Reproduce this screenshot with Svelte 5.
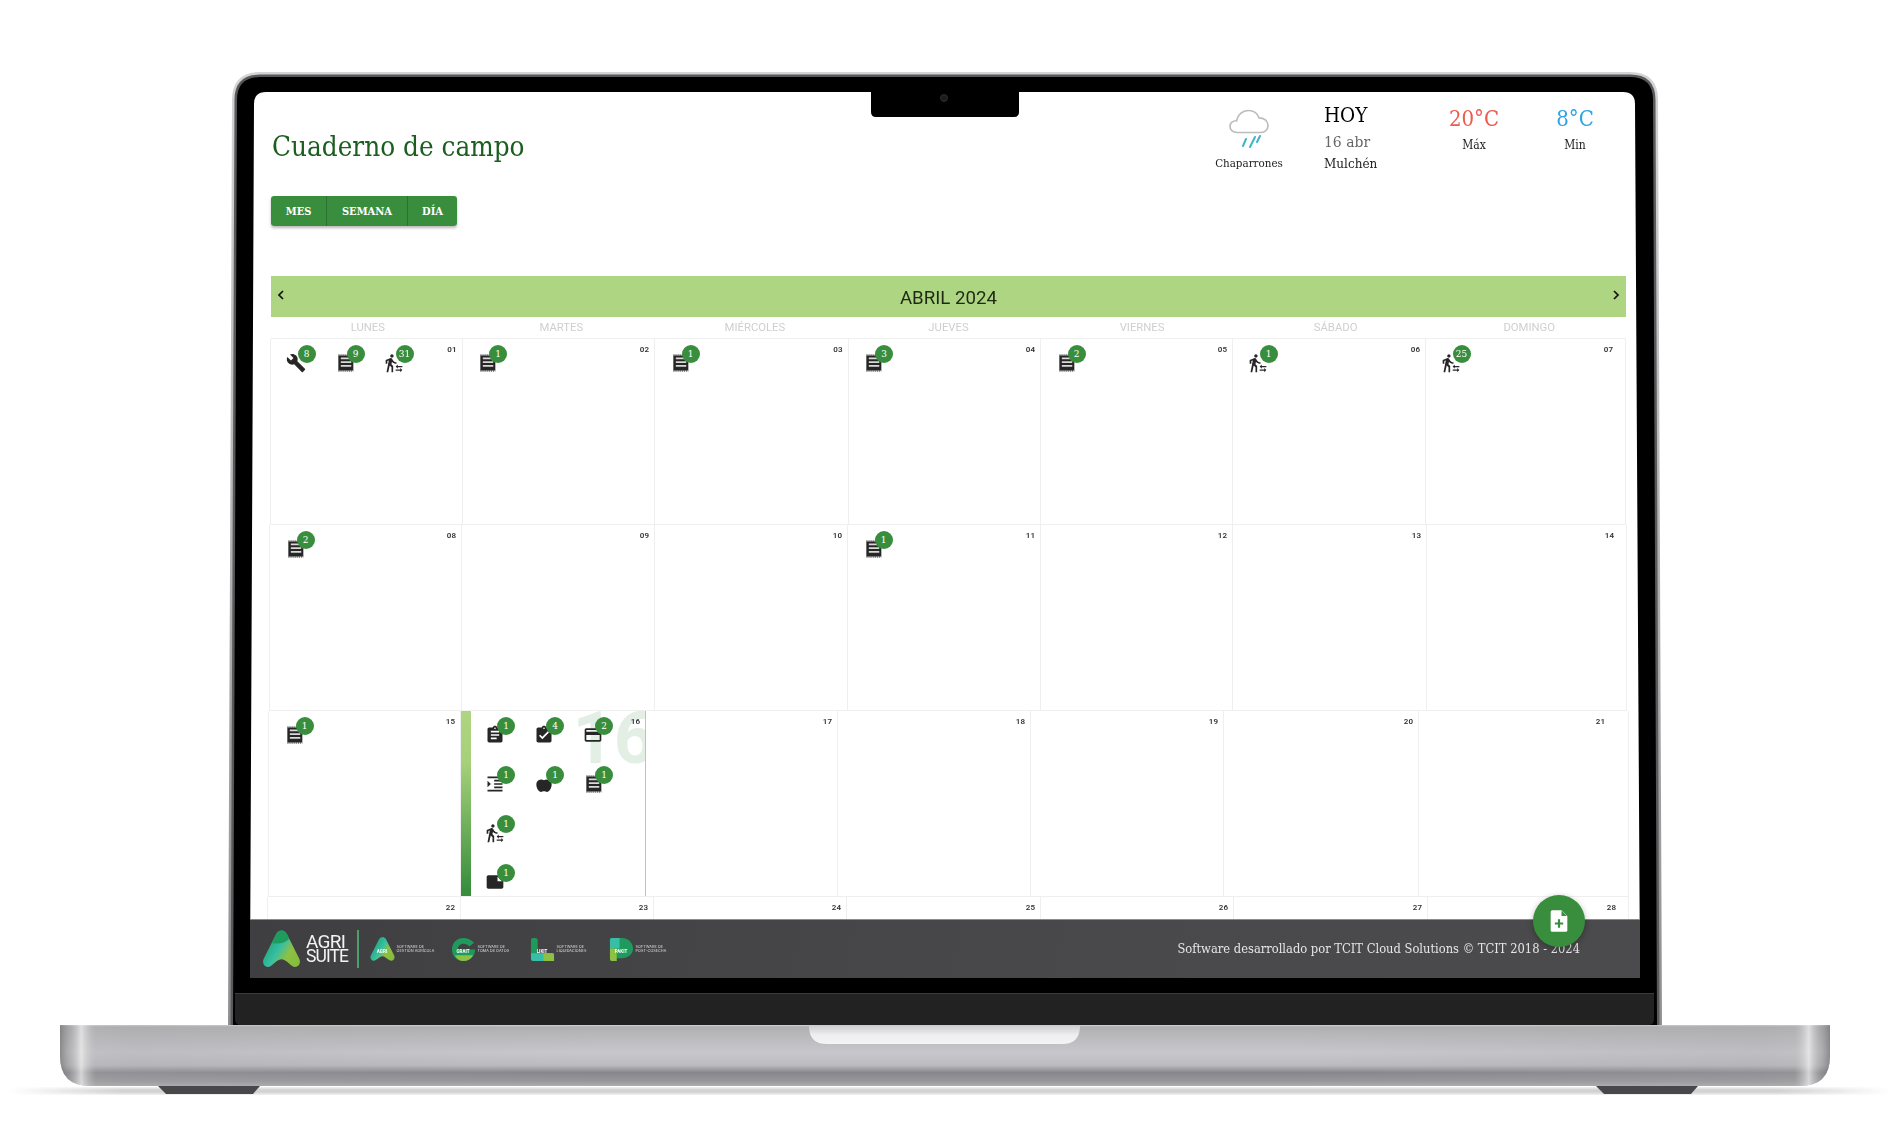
<script>
  const days = ['Lunes', 'Martes', 'Miércoles', 'Jueves', 'Viernes', 'Sábado', 'Domingo'];
  const icons = {
    wrench: 'M22.7 19l-9.1-9.1c.9-2.3.4-5-1.5-6.9-2-2-5-2.4-7.4-1.3L9 6 6 9 1.6 4.7C.4 7.1.9 10.1 2.9 12.1c1.9 1.9 4.6 2.4 6.9 1.5l9.1 9.1c.4.4 1 .4 1.4 0l2.3-2.3c.5-.4.5-1.1.1-1.4z',
    walk: 'M16.49 15.5v-1.75L14 16.25l2.49 2.5V17H22v-1.5zm3.02 4.25H14v1.5h5.51V23L22 20.5 19.51 18zM9.5 5.5c1.1 0 2-.9 2-2s-.9-2-2-2-2 .9-2 2 .9 2 2 2zM5.75 8.9L3 23h2.1l1.75-8L9 17v6h2v-7.55L8.95 13.4l.6-3C10.85 12 12.8 13 15 13v-2c-1.85 0-3.45-1-4.35-2.45l-.95-1.6C9.35 6.35 8.7 6 8 6c-.25 0-.5.05-.75.15L2 8.3V13h2V9.65l1.75-.75',
    clip: 'M19 3h-4.18C14.4 1.84 13.3 1 12 1c-1.3 0-2.4.84-2.82 2H5c-1.1 0-2 .9-2 2v14c0 1.1.9 2 2 2h14c1.1 0 2-.9 2-2V5c0-1.1-.9-2-2-2zm-7 0c.55 0 1 .45 1 1s-.45 1-1 1-1-.45-1-1 .45-1 1-1zm2 14H7v-2h7v2zm3-4H7v-2h10v2zm0-4H7V7h10v2z',
    check: 'M19 3h-4.18C14.4 1.84 13.3 1 12 1c-1.3 0-2.4.84-2.82 2H5c-1.1 0-2 .9-2 2v14c0 1.1.9 2 2 2h14c1.1 0 2-.9 2-2V5c0-1.1-.9-2-2-2zm-7 0c.55 0 1 .45 1 1s-.45 1-1 1-1-.45-1-1 .45-1 1-1zm-2 14l-4-4 1.41-1.41L10 14.17l6.59-6.59L18 9l-8 8z',
    card: 'M20 4H4c-1.11 0-1.99.89-1.99 2L2 18c0 1.11.89 2 2 2h16c1.11 0 2-.89 2-2V6c0-1.11-.89-2-2-2zm0 14H4v-6h16v6zm0-10H4V6h16v2z',
    indent: 'M3 21h18v-2H3v2zM3 8v8l4-4-4-4zm8 9h10v-2H11v2zM3 3v2h18V3H3zm8 6h10V7H11v2zm0 4h10v-2H11v2z',
    apple: 'M12 7.5c-2-1.6-6.6-1.6-8.6 2.2-2 4.4 1.3 11.8 4.8 11.8 1.5 0 2.4-.8 3.8-.8s2.3.8 3.8.8c3.5 0 6.8-7.4 4.8-11.8-2-3.8-6.6-3.8-8.6-2.2z',
    note: 'M22 10l-6-6H4c-1.1 0-2 .9-2 2v12.01c0 1.1.9 1.99 2 1.99l16-.01c1.1 0 2-.89 2-1.99v-8zm-7-4.5l5.5 5.5H15V5.5z'
  };
  const d = (n) => [['doc', n]];
  const w = (n) => [['walk', n]];
  const rows = [
    { cls: 'r1', cells: [
      { n: '01', items: [['wrench', 8], ['doc', 9], ['walk', 31]] },
      { n: '02', items: d(1) }, { n: '03', items: d(1) }, { n: '04', items: d(3) },
      { n: '05', items: d(2) }, { n: '06', items: w(1) }, { n: '07', items: w(25), end: true }
    ] },
    { cls: 'r2', cells: [
      { n: '08', items: d(2) }, { n: '09', items: [] }, { n: '10', items: [] },
      { n: '11', items: d(1) }, { n: '12', items: [] }, { n: '13', items: [] }, { n: '14', items: [], end: true }
    ] },
    { cls: 'r3', cells: [
      { n: '15', items: d(1) },
      { n: '16', today: true, items: [['clip', 1], ['check', 4], ['card', 2], ['indent', 1], ['apple', 1], ['doc', 1], ['walk', 1], null, null, ['note', 1]] },
      { n: '17', items: [] }, { n: '18', items: [] }, { n: '19', items: [] }, { n: '20', items: [] },
      { n: '21', items: [], far: true }
    ] },
    { cls: 'r4', cells: [
      { n: '22', items: [] }, { n: '23', items: [] }, { n: '24', items: [] }, { n: '25', items: [] },
      { n: '26', items: [] }, { n: '27', items: [] }, { n: '28', items: [], end: true }
    ] }
  ];
  const products = [
    { key: 'a', name: 'AGRI', line: 'GESTIÓN AGRÍCOLA' },
    { key: 'g', name: 'GRAIT', line: 'TOMA DE DATOS' },
    { key: 'l', name: 'LIKIT', line: 'LIQUIDACIONES' },
    { key: 'p', name: 'PAKIT', line: 'POST-COSECHA' }
  ];
</script>

<div class="laptop">
  <svg class="art" viewBox="0 0 1900 1143" aria-hidden="true">
    <defs>
      <linearGradient id="edge" x1="0" x2="0" y1="0" y2="1">
        <stop offset="0" stop-color="#d4d4d6" /><stop offset="1" stop-color="#8f8f92" />
      </linearGradient>
      <linearGradient id="baseV" x1="0" x2="0" y1="0" y2="1">
        <stop offset="0" stop-color="#d6d6d8" /><stop offset=".03" stop-color="#b0b0b3" />
        <stop offset=".45" stop-color="#c8c8cc" /><stop offset=".66" stop-color="#bcbcc0" />
        <stop offset=".78" stop-color="#86878b" /><stop offset=".92" stop-color="#98989c" />
        <stop offset="1" stop-color="#adadb0" />
      </linearGradient>
      <linearGradient id="baseH" x1="0" x2="1" y1="0" y2="0">
        <stop offset="0" stop-color="#707072" stop-opacity=".7" />
        <stop offset=".005" stop-color="#9a9a9c" stop-opacity=".5" />
        <stop offset=".012" stop-color="#eeeeee" stop-opacity=".75" />
        <stop offset=".02" stop-color="#b0b0b3" stop-opacity=".3" />
        <stop offset=".04" stop-color="#a8a8ac" stop-opacity=".3" />
        <stop offset=".3" stop-color="#a8a8ac" stop-opacity="0" />
        <stop offset=".7" stop-color="#a8a8ac" stop-opacity="0" />
        <stop offset=".96" stop-color="#a8a8ac" stop-opacity=".3" />
        <stop offset=".98" stop-color="#b0b0b3" stop-opacity=".3" />
        <stop offset=".988" stop-color="#eeeeee" stop-opacity=".75" />
        <stop offset=".995" stop-color="#9a9a9c" stop-opacity=".5" />
        <stop offset="1" stop-color="#707072" stop-opacity=".7" />
      </linearGradient>
      <linearGradient id="shadow" x1="0" x2="1" y1="0" y2="0">
        <stop offset="0" stop-color="#c4c4c4" stop-opacity="0" /><stop offset=".06" stop-color="#c4c4c4" stop-opacity=".8" />
        <stop offset=".94" stop-color="#c4c4c4" stop-opacity=".8" /><stop offset="1" stop-color="#c4c4c4" stop-opacity="0" />
      </linearGradient>
      <linearGradient id="tray" x1="0" x2="0" y1="0" y2="1">
        <stop offset="0" stop-color="#cfcfd2" /><stop offset=".5" stop-color="#eeeef0" /><stop offset="1" stop-color="#f4f4f5" />
      </linearGradient>
      <filter id="soft"><feGaussianBlur stdDeviation="1.6" /></filter>
    </defs>
    <rect x="10" y="1088" width="1880" height="6" fill="url(#shadow)" filter="url(#soft)" />
    <path d="M232 100Q232 72 260 72H1630Q1658 72 1658 100L1662 1026H228Z" fill="url(#edge)" />
    <path d="M234.500 100Q234.500 74.500 260 74.500H1630Q1655.500 74.500 1655.500 100L1659.500 1026H230.500Z" fill="#59595b" />
    <path d="M237 100Q237 77 260 77H1630Q1653 77 1653 100L1657 1026H233Z" fill="#000" />
    <path d="M235 994H1654V1019Q1654 1025 1648 1025H241Q235 1025 235 1019Z" fill="#222223" />
    <path d="M235 993.5H1654" stroke="#3a3a3b" />
    <path d="M254 104Q254 92 266 92H871V112Q871 117 876 117H1014Q1019 117 1019 112V92H1623Q1635 92 1635 104L1640 978H250Z" fill="#fff" />
    <circle cx="944" cy="98" r="3.5" fill="#1c1c1e" stroke="#2d2d30" />
    <path d="M60 1025H1830V1056Q1830 1086 1800 1086H90Q60 1086 60 1056Z" fill="url(#baseV)" />
    <path d="M60 1025H1830V1056Q1830 1086 1800 1086H90Q60 1086 60 1056Z" fill="url(#baseH)" />
    <path d="M809 1026H1080Q1080 1044 1062 1044H827Q809 1044 809 1026Z" fill="url(#tray)" />
    <path d="M158 1086H260L253 1094H166Z" fill="#48484b" />
    <path d="M1596 1086H1698L1691 1094H1604Z" fill="#48484b" />
  </svg>

  <div class="screen">
    <header class="head">
      <div class="lead">
        <h1>Cuaderno de campo</h1>
        <div class="views">
          <button type="button">MES</button><button type="button">SEMANA</button><button type="button">DÍA</button>
        </div>
      </div>
      <div class="weather">
        <div class="w-now">
          <svg class="cloud" viewBox="0 0 42 42" aria-hidden="true">
            <path d="M9 25.5C4.5 25.5 2 22.5 2 19.500C2 16 5 13.500 8.500 13.800C9.500 8 14.500 3.500 20.500 3.500C26 3.500 29.500 6.500 31 10.800C36 10.800 40 14 40 18.500C40 22.500 37 25.500 33 25.500Z" fill="none" stroke="#bdbdbd" stroke-width="1.700" />
            <path d="M15 39l3-7M22 40l5-10M29 35l3-6" fill="none" stroke="#3fb4c8" stroke-width="2" stroke-linecap="round" />
          </svg>
          <span>Chaparrones</span>
        </div>
        <div class="w-day">
          <strong>HOY</strong>
          <em>16 abr</em>
          <span>Mulchén</span>
        </div>
        <div class="w-temp max"><b>20°C</b><span>Máx</span></div>
        <div class="w-temp min"><b>8°C</b><span>Min</span></div>
      </div>
    </header>

    <section class="calendar">
      <div class="band">
        <svg viewBox="0 0 12 12" aria-hidden="true"><path d="M8 2L4 6l4 4" /></svg>
        <span>ABRIL 2024</span>
        <svg viewBox="0 0 12 12" aria-hidden="true"><path d="M4 2l4 4-4 4" /></svg>
      </div>
      <div class="weekdays">
        {#each days as day}<span>{day}</span>{/each}
      </div>
      {#each rows as row}
        <div class="row {row.cls}">
          {#each row.cells as cell}
            <div class="cell" class:today={cell.today} class:end={cell.end} class:far={cell.far}>
              {#if cell.today}<span class="ghost">16</span>{/if}
              <span class="num">{cell.n}</span>
              <div class="items">
                {#each cell.items as item}
                  {#if item}
                    <div class="item">
                      <svg viewBox="0 0 24 24" aria-hidden="true">
                        {#if item[0] === 'doc'}
                          <rect x="4" y="3" width="18" height="18" fill="#262626" />
                          <path d="M4 21.600H22M4 2.400H22" stroke="#262626" stroke-width="1.200" stroke-dasharray="1.500 1" />
                          <path d="M7 6.500H19.500M7 11H19.500M7 15.500H19.500" stroke="#d9d9d9" stroke-width="2.200" />
                        {:else}
                          <path d={icons[item[0]]} fill="#262626" />
                        {/if}
                      </svg>
                      <span class="badge" class:wide={item[1] > 9}>{item[1]}</span>
                    </div>
                  {:else}
                    <div class="item"></div>
                  {/if}
                {/each}
              </div>
            </div>
          {/each}
        </div>
      {/each}
    </section>

    <footer class="foot">
      <div class="brands">
        <svg class="suite-mark" viewBox="0 0 40 40" aria-hidden="true">
          <defs>
            <linearGradient id="sm" x1="0" x2="1" y1=".2" y2=".8">
              <stop offset="0" stop-color="#1f9a5c" /><stop offset=".45" stop-color="#36bfa6" /><stop offset=".7" stop-color="#8ec043" /><stop offset="1" stop-color="#84bd3c" />
            </linearGradient>
          </defs>
          <path d="M14 5C17 -1 23 -1 26 5L38 29C41 35 36 40 31 37C27 34 24 30 20 30C16 30 13 34 9 37C4 40 -1 35 2 29Z" fill="url(#sm)" />
          <path d="M14 5C17 -1 23 -1 26 5L28 9C23 14 15 15 10 13Z" fill="#1d9c5e" />
        </svg>
        <div class="suite-word"><span>AGRI</span><span>SUITE</span></div>
        <i class="rule"></i>
        {#each products as p}
          <div class="product {p.key}">
            <svg viewBox="0 0 26 26" aria-hidden="true">
              {#if p.key === 'a'}
                <path d="M9 3C11 -1 15 -1 17 3L25 19C27 23 23 26 20 24C17 22 15 20 13 20C11 20 9 22 6 24C3 26 -1 23 1 19Z" fill="url(#sm)" />
              {:else if p.key === 'g'}
                <path d="M13 1C17 1 21 2.500 24 6L19 10C17.500 8 15.500 7 13 7C9.500 7 7 9.500 7 13H25C25 20 20 25 13 25C6 25 1 20 1 13C1 6 6 1 13 1Z" fill="#1f9a5c" />
                <path d="M4 19H23C21 23 17 25 13 25C9 25 6 23 4 19Z" fill="#8ec043" />
              {:else if p.key === 'l'}
                <path d="M1 3Q1 1 3 1H6Q8 1 8 3V15Q8 17 10 17H22Q25 17 25 20V25H4Q1 25 1 22Z" fill="#1f9a5c" />
                <path d="M1 17H25V25H4Q1 25 1 22Z" fill="#36bfa6" />
                <path d="M14 17H22Q25 17 25 20V25H14Z" fill="#8ec043" />
              {:else}
                <path d="M3 1H13C20 1 25 6 25 12C25 18 20 22 13 22H8V25H3Q1 25 1 23V3Q1 1 3 1Z" fill="#1f9a5c" />
                <path d="M3 1H11V12H1V3Q1 1 3 1Z" fill="#36bfa6" />
                <path d="M1 12H8V25H3Q1 25 1 23Z" fill="#8ec043" />
              {/if}
            </svg>
            <b>{p.name}</b>
            <small>SOFTWARE DE<br />{p.line}</small>
          </div>
        {/each}
      </div>
      <p>Software desarrollado por TCIT Cloud Solutions © TCIT 2018 - 2024</p>
    </footer>

    <button class="fab" type="button" aria-label="Nuevo registro">
      <svg viewBox="0 0 24 28" aria-hidden="true">
        <path d="M4 1H15L22 8V25Q22 27 20 27H4Q2 27 2 25V3Q2 1 4 1Z" fill="#fff" />
        <path d="M15 1.500L21.500 8H15Z" fill="#388e3c" />
        <path d="M12 12V22M7 17H17" stroke="#388e3c" stroke-width="2.600" />
      </svg>
    </button>
  </div>
</div>

<style>
  :global(body) { margin: 0; background: #fff; }
  .laptop { position: relative; width: 1900px; height: 1143px; overflow: hidden; background: #fff; }
  .art { position: absolute; inset: 0; width: 1900px; height: 1143px; }
  .screen { position: relative; margin-left: 250px; padding-top: 92px; width: 1390px; font-family: "DejaVu Serif Condensed", "DejaVu Serif", serif; font-stretch: condensed; filter: blur(.3px); }

  .head { display: flex; justify-content: space-between; height: 184px; }
  .lead { padding: 40px 0 0 22px; }
  h1 { margin: 0; font-size: 27.600px; line-height: 30px; font-weight: 400; color: #1b5e20; }
  .views { display: flex; margin-top: 34px; margin-left: -1px; width: max-content; border-radius: 3px; overflow: hidden; box-shadow: 0 2px 3px rgba(0,0,0,.28); }
  .views button { height: 30px; border: 0; padding: 0; background: #388e3c; color: #fff; font: 700 11px "DejaVu Serif Condensed", "DejaVu Serif", serif; border-right: 1px solid #2f6f33; }
  .views button:nth-child(1) { width: 56px; }
  .views button:nth-child(2) { width: 81px; }
  .views button:nth-child(3) { width: 49px; border-right: 0; }

  .weather { display: flex; padding-right: 35px; color: #222; }
  .w-now { width: 66px; margin-right: 42px; margin-left: 1px; padding-top: 15px; display: flex; flex-direction: column; align-items: center; }
  .cloud { width: 42px; height: 42px; }
  .w-now span { margin-top: 6px; font-size: 11.500px; line-height: 16px; white-space: nowrap; }
  .w-day { width: 120px; padding-top: 11px; display: flex; flex-direction: column; }
  .w-day strong { font-size: 20.500px; line-height: 24px; font-weight: 400; color: #000; }
  .w-day em { margin-top: 1px; font-style: normal; font-size: 15.500px; line-height: 28px; color: #666; }
  .w-day span { font-size: 13.400px; line-height: 16px; }
  .w-temp { width: 60px; padding-top: 12px; display: flex; flex-direction: column; align-items: center; }
  .w-temp b { font-size: 22px; line-height: 30px; font-weight: 400; }
  .w-temp span { margin-top: 1px; font-size: 12px; line-height: 20px; }
  .max { margin-right: 41px; }
  .max b { color: #ef5a4f; }
  .min b { color: #2fa5e6; }

  .calendar { font-family: Roboto, sans-serif; font-stretch: normal; height: 643px; overflow: hidden; }
  .band { margin-left: 21px; width: 1355px; height: 41px; padding: 0 4px; box-sizing: border-box; display: flex; align-items: center; justify-content: space-between; background: #aed581; }
  .band span { font-size: 18.700px; color: #1f2a16; padding-top: 2px; }
  .band svg { width: 12px; height: 12px; margin-top: -4px; fill: none; stroke: #111; stroke-width: 1.700; }
  .weekdays { margin-left: 21px; width: 1355px; height: 21px; display: grid; grid-template-columns: repeat(7, 1fr); align-items: center; text-align: center; border-bottom: 1px solid #f0f0f0; font-size: 11.300px; color: #cfcfcf; text-transform: uppercase; }
  .row { display: grid; width: max-content; height: 186px; box-sizing: border-box; border-bottom: 1px solid #efefef; }
  .r1 { margin-left: 20px; grid-template-columns: 192.500px 192.500px 193.500px 192.500px 192px 193px 200px; }
  .r2 { margin-left: 19px; grid-template-columns: 193px 193px 193px 193px 192px 194px 200px; }
  .r3 { margin-left: 18px; grid-template-columns: 193px 185px 192px 193px 193px 195px 210px; }
  .r4 { margin-left: 17px; grid-template-columns: 194px 193px 193px 194px 193px 194px 201px; height: 30px; border-bottom: 0; }
  .cell { position: relative; box-sizing: border-box; border-right: 1px solid #efefef; padding: 9px 0 0 11.500px; overflow: hidden; }
  .cell:first-child { border-left: 1px solid #efefef; }
  .num { position: absolute; top: 5.500px; right: 5px; font-size: 8px; line-height: 10px; font-weight: 600; color: #333; }
  .cell.end .num { right: 12px; }
  .cell.far .num { right: 23px; }
  .today { padding-left: 21px; border-right: 1.500px solid #aed581; background: linear-gradient(#aed581 0%, #a6d07a 28%, #388e3c 97%) left top / 10px 100% no-repeat; }
  .ghost { position: absolute; right: -10px; top: -8px; font-size: 72px; line-height: 72px; font-weight: 700; color: #e3efe4; }
  .items { position: relative; display: grid; grid-template-columns: repeat(3, 49px); grid-auto-rows: 49px; }
  .item { position: relative; }
  .item svg { position: absolute; left: 3px; top: 5px; width: 20px; height: 20px; }
  .badge { position: absolute; left: 24px; top: -3px; transform: translateX(-50%); min-width: 18px; height: 18px; box-sizing: border-box; border-radius: 9px; background: #388e3c; color: #fff; font: 400 10px/18px "DejaVu Serif Condensed", "DejaVu Serif", serif; text-align: center; }
  .badge.wide { padding: 0 3px; }

  .foot { display: flex; align-items: center; justify-content: space-between; height: 59px; box-sizing: border-box; padding-right: 60px; border-top: 1px solid #8b8b8d; background: linear-gradient(100deg, #3f3f41, #49494b 60%, #4b4b4d); }
  .foot p { margin: 0 0 2px; font-size: 12.800px; color: #e6e6e6; }
  .brands { display: flex; align-items: center; padding-left: 12px; }
  .suite-mark { width: 39px; height: 39px; flex: none; }
  .suite-word { margin-left: 5px; width: 41px; display: flex; flex-direction: column; font: 400 19px/15px Roboto, sans-serif; color: #f3f3f3; letter-spacing: -.7px; }
  .suite-word span:last-child { font-size: 17.500px; letter-spacing: -.9px; }
  .rule { width: 1.500px; height: 38px; margin: 0 11px 0 10px; background: #4f9f6a; }
  .product { position: relative; display: flex; align-items: center; color: #ddd; }
  .product svg { width: 25px; height: 25px; flex: none; }
  .product b { position: absolute; left: 0; width: 25px; text-align: center; top: 12px; font: 700 4.500px/6px Roboto, sans-serif; color: #fff; }
  .product small { margin-left: 2px; font: 400 3.800px/4.300px Inter, sans-serif; white-space: nowrap; letter-spacing: .05px; }
  .product.a { width: 81px; }
  .product.g { width: 79px; }
  .product.l { width: 79px; }
  .product.p { width: 60px; }

  .fab { position: absolute; left: 1283px; top: 895px; width: 52px; height: 52px; padding: 0; border: 0; border-radius: 50%; background: #388e3c; box-shadow: 0 2px 6px rgba(0,0,0,.3); display: flex; align-items: center; justify-content: center; }
  .fab svg { width: 20px; height: 24px; }
</style>
